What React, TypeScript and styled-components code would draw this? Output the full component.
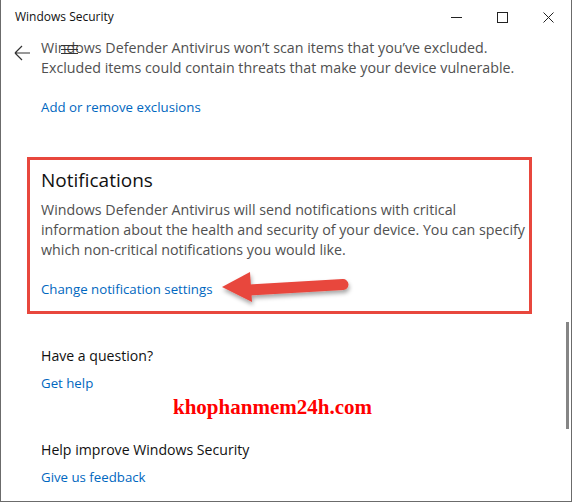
import React from "react";
import styled, { createGlobalStyle } from "styled-components";

const Global = createGlobalStyle`
  html, body { margin: 0; padding: 0; background: #fff; }
  * { box-sizing: border-box; }
`;

const Window = styled.div`
  position: relative;
  width: 572px;
  height: 502px;
  background: #fff;
  border-left: 1px solid #6b6b6b;
  border-right: 1px solid #6b6b6b;
  border-bottom: 1px solid #6b6b6b;
  font-family: "Open Sans", "Noto Sans", sans-serif;
  overflow: hidden;
  display: flex;
  flex-direction: column;
`;

const TitleBar = styled.div`
  height: 34px;
  display: flex;
  align-items: center;
  padding-left: 14px;
  flex-shrink: 0;
`;

const Title = styled.div`
  font-size: 12px;
  color: #111;
  flex: 1;
  padding-bottom: 1px;
`;

const Controls = styled.div`
  display: flex;
  height: 100%;
  align-items: center;
`;

const CtrlBtn = styled.div`
  width: 46px;
  height: 100%;
  display: flex;
  align-items: center;
  justify-content: center;
`;

const Content = styled.div`
  flex: 1;
  display: flex;
  flex-direction: column;
  padding: 4px 0 0 40px;
`;

const Body = styled.p<{ $mt?: number }>`
  margin: ${(p) => p.$mt ?? 0}px 0 0 0;
  font-size: 14.25px;
  line-height: 20px;
  color: #505050;
  white-space: pre-line;
`;

const LinkText = styled.a<{ $mt?: number }>`
  display: block;
  margin-top: ${(p) => p.$mt ?? 0}px;
  font-size: 13.25px;
  line-height: 20px;
  color: #0067c0;
  text-decoration: none;
  width: max-content;
`;

const Heading = styled.h2`
  margin: 0;
  font-size: 19px;
  line-height: 28px;
  font-weight: 400;
  color: #111;
`;

const SubHeading = styled.h3<{ $mt: number }>`
  margin: ${(p) => p.$mt}px 0 0 0;
  font-size: 14.1px;
  line-height: 20px;
  font-weight: 400;
  color: #111;
`;

const Highlight = styled.section`
  margin: 40px 0 0 -14px;
  width: 505px;
  border: 3px solid #e8473d;
  padding: 6px 0 12px 11px;
  display: flex;
  flex-direction: column;
`;

const Overlay = styled.div<{ $x: number; $y: number }>`
  position: absolute;
  left: ${(p) => p.$x}px;
  top: ${(p) => p.$y}px;
  line-height: 0;
`;

const Watermark = styled.div`
  position: absolute;
  left: 172px;
  top: 394px;
  font-family: "Liberation Serif", serif;
  font-weight: 700;
  font-size: 21px;
  line-height: 26px;
  color: #ff0000;
`;

const ScrollThumb = styled.div`
  position: absolute;
  left: 565px;
  top: 322px;
  width: 3px;
  height: 107px;
  background: #858585;
`;

export default function App() {
  return (
    <>
      <Global />
      <Window>
        <TitleBar>
          <Title>Windows Security</Title>
          <Controls>
            <CtrlBtn>
              <svg width="11" height="11" viewBox="0 0 11 11">
                <line x1="0" y1="5.5" x2="11" y2="5.5" stroke="#222" strokeWidth="1" />
              </svg>
            </CtrlBtn>
            <CtrlBtn>
              <svg width="11" height="11" viewBox="0 0 11 11">
                <rect x="0.5" y="0.5" width="10" height="10" fill="none" stroke="#222" strokeWidth="1" />
              </svg>
            </CtrlBtn>
            <CtrlBtn>
              <svg width="11" height="11" viewBox="0 0 11 11">
                <path d="M0.5 0.5 L10.5 10.5 M10.5 0.5 L0.5 10.5" stroke="#222" strokeWidth="1" />
              </svg>
            </CtrlBtn>
          </Controls>
        </TitleBar>
        <Content>
          <Body>
            {"Windows Defender Antivirus won’t scan items that you’ve excluded.\nExcluded items could contain threats that make your device vulnerable."}
          </Body>
          <LinkText $mt={19}>Add or remove exclusions</LinkText>
          <Highlight>
            <Heading>Notifications</Heading>
            <Body $mt={6}>
              {"Windows Defender Antivirus will send notifications with critical\ninformation about the health and security of your device.  You can specify\nwhich non-critical notifications you would like."}
            </Body>
            <LinkText $mt={19}>Change notification settings</LinkText>
          </Highlight>
          <SubHeading $mt={32}>Have a question?</SubHeading>
          <LinkText $mt={7}>Get help</LinkText>
          <SubHeading $mt={47}>Help improve Windows Security</SubHeading>
          <LinkText $mt={7}>Give us feedback</LinkText>
        </Content>

        <Overlay $x={13} $y={45}>
          <svg width="17" height="16" viewBox="0 0 17 16">
            <path d="M1 8 H16 M1 8 L8 1 M1 8 L8 15" stroke="#333" strokeWidth="1.2" fill="none" />
          </svg>
        </Overlay>
        <Overlay $x={60} $y={44}>
          <svg width="17" height="11" viewBox="0 0 17 11">
            <path d="M0 1.5 H17 M0 5.5 H17 M0 9.5 H17" stroke="#333" strokeWidth="1" />
          </svg>
        </Overlay>

        <Overlay $x={214} $y={264}>
          <svg width="145" height="50" viewBox="0 0 145 50">
            <defs>
              <filter id="sh" x="-20%" y="-40%" width="140%" height="180%">
                <feDropShadow dx="1" dy="3" stdDeviation="2" floodColor="#000" floodOpacity="0.35" />
              </filter>
            </defs>
            <g filter="url(#sh)">
              <line x1="34" y1="26" x2="128" y2="20.5" stroke="#e8473d" strokeWidth="11" strokeLinecap="round" />
              <polygon points="7,23 35,8 37,38" fill="#e8473d" />
            </g>
          </svg>
        </Overlay>

        <Watermark>khophanmem24h.com</Watermark>
        <ScrollThumb />
      </Window>
    </>
  );
}
